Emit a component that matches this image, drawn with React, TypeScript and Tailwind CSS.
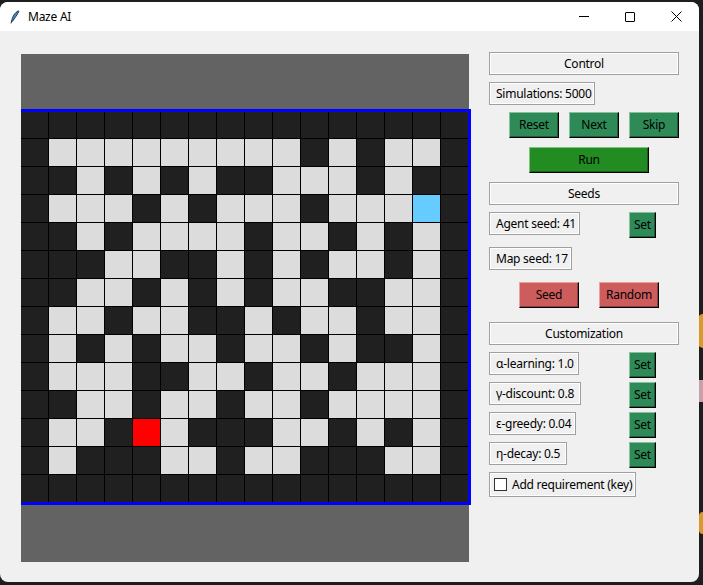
import React from "react";

const MAZE = [
  "DDDDDDDDDDDDDDDD",
  "DLLLLLLLLLDLDLLD",
  "DDLDLDLDDLLLDLDD",
  "DLLLDLDLLLDLLLBD",
  "DDLDLLLLDLLDLDLD",
  "DDDLLDDLDLDLLDLD",
  "DDLLDLDLDLLDDLLD",
  "DLLDLLDDLDLLDLLD",
  "DLDLDLLDLLDLDDLD",
  "DLLLDDLLDLLDLLLD",
  "DDLLDLLDLLDLLLLD",
  "DLLDRLDDDLLDLDLD",
  "DLDDDLLDLLDDDLLD",
  "DDDDDDDDDDDDDDDD",
];

const cellColor: Record<string, string> = {
  D: "bg-[#202020]",
  L: "bg-[#dcdcdc]",
  B: "bg-[#66ccff]",
  R: "bg-[#ff0000]",
};

function Frame({ children, w, center }: { children: React.ReactNode; w: string; center?: boolean }) {
  return (
    <div
      className={`flex h-[23px] items-center whitespace-nowrap border border-[#a0a0a0] shadow-[inset_1px_1px_0_#ffffff,inset_-1px_-1px_0_#ffffff] ${w} ${
        center ? "justify-center" : "pl-[6px]"
      }`}
    >
      {children}
    </div>
  );
}

function Btn({ children, tone, w }: { children: React.ReactNode; tone: "sea" | "forest" | "red"; w: string }) {
  const tones = {
    sea: "bg-[#2e8b57] border-t-[#86c09d] border-l-[#86c09d] shadow-[inset_-1px_-1px_0_#1d5c39]",
    forest: "bg-[#228b22] border-t-[#7fc07f] border-l-[#7fc07f] shadow-[inset_-1px_-1px_0_#166016]",
    red: "bg-[#cd5c5c] border-t-[#eba0a0] border-l-[#eba0a0] shadow-[inset_-1px_-1px_0_#8e3c3c]",
  };
  return (
    <div
      className={`flex h-[26px] items-center justify-center whitespace-nowrap border border-r-black border-b-black text-black ${tones[tone]} ${w}`}
    >
      {children}
    </div>
  );
}

function Feather() {
  return (
    <svg width="10" height="14" viewBox="0 0 10 14">
      <path d="M8.5 0.8 C5 2.5 2.5 6 1.6 11 L2.6 11.3 C4.5 8 7.5 5 8.8 1.2 Z" fill="#4f86d6" stroke="#1b2a4a" strokeWidth="0.9" />
      <path d="M1.6 11 L1 13.4" stroke="#1b2a4a" strokeWidth="1" />
    </svg>
  );
}

export default function App() {
  return (
    <div
      className="relative h-[585px] w-[703px] overflow-hidden bg-[#1e1e1e] text-[12px] tracking-[-0.25px] text-black"
      style={{ fontFamily: '"Noto Sans", "Open Sans", sans-serif' }}
    >
      <div className="absolute right-0 top-[314px] h-[34px] w-[5px] rounded-l-full bg-[#d99a2b]" />
      <div className="absolute right-0 top-[380px] h-[22px] w-[4px] bg-[#c9a0a8]" />
      <div className="absolute right-0 top-[512px] h-[22px] w-[4px] rounded-l-full bg-[#d99a2b]" />

      <div className="relative mt-[2px] flex h-[580px] w-[699px] flex-col overflow-hidden rounded-lg bg-[#f0f0f0]">
        <div className="flex h-[29px] items-center bg-white">
          <div className="ml-[9px] mt-[1px] flex w-[12px] justify-center">
            <Feather />
          </div>
          <div className="ml-[7px] text-[12px] leading-none">Maze AI</div>
          <div className="ml-auto flex h-full items-center">
            <div className="flex w-[46px] justify-center">
              <div className="h-px w-[10px] bg-black" />
            </div>
            <div className="flex w-[46px] justify-center">
              <div className="h-[10px] w-[10px] rounded-[1px] border border-black" />
            </div>
            <div className="flex w-[46px] justify-center">
              <svg width="11" height="11" viewBox="0 0 11 11">
                <path d="M0.5 0.5 L10.5 10.5 M10.5 0.5 L0.5 10.5" stroke="black" strokeWidth="1" />
              </svg>
            </div>
          </div>
        </div>

        <div className="flex pl-[21px] pt-[23px]">
          <div className="flex w-[448px] flex-col bg-[#636363]">
            <div className="h-[55px]" />
            <div className="w-[450px] border-y-[3px] border-r-[3px] border-[#0000ff] bg-black">
              <div className="grid grid-cols-[27px_repeat(15,27px)] grid-rows-[26px_repeat(13,27px)] gap-px">
                {MAZE.flatMap((row, r) =>
                  row.split("").map((c, i) => <div key={`${r}-${i}`} className={cellColor[c]} />),
                )}
              </div>
            </div>
            <div className="h-[57px]" />
          </div>

          <div className="ml-[20px] mt-[-2px] flex w-[190px] flex-col">
            <Frame w="w-[190px]" center>
              Control
            </Frame>
            <div className="mt-[7px]">
              <Frame w="w-[106px]">Simulations: 5000</Frame>
            </div>
            <div className="mt-[7px] flex gap-[10px] pl-[20px]">
              <Btn tone="sea" w="w-[50px]">
                Reset
              </Btn>
              <Btn tone="sea" w="w-[50px]">
                Next
              </Btn>
              <Btn tone="sea" w="w-[50px]">
                Skip
              </Btn>
            </div>
            <div className="mt-[9px] pl-[40px]">
              <Btn tone="forest" w="w-[120px]">
                Run
              </Btn>
            </div>
            <div className="mt-[9px]">
              <Frame w="w-[190px]" center>
                Seeds
              </Frame>
            </div>
            <div className="mt-[7px] flex items-start">
              <Frame w="w-[91px]">Agent seed: 41</Frame>
              <div className="ml-[49px]">
                <Btn tone="sea" w="w-[27px]">
                  Set
                </Btn>
              </div>
            </div>
            <div className="mt-[9px]">
              <Frame w="w-[83px]">Map seed: 17</Frame>
            </div>
            <div className="mt-[12px] flex gap-[20px] pl-[30px]">
              <Btn tone="red" w="w-[60px]">
                Seed
              </Btn>
              <Btn tone="red" w="w-[60px]">
                Random
              </Btn>
            </div>
            <div className="mt-[14px]">
              <Frame w="w-[190px]" center>
                Customization
              </Frame>
            </div>
            {[
              ["α-learning: 1.0", "w-[90px]"],
              ["γ-discount: 0.8", "w-[92px]"],
              ["ε-greedy: 0.04", "w-[87px]"],
              ["η-decay: 0.5", "w-[78px]"],
            ].map(([label, w], i) => (
              <div key={label} className={`flex items-start ${i === 0 ? "mt-[7px]" : "mt-[4px]"}`}>
                <Frame w={w}>{label}</Frame>
                <div className="ml-auto mr-[23px]">
                  <Btn tone="sea" w="w-[27px]">
                    Set
                  </Btn>
                </div>
              </div>
            ))}
            <div className="mt-[4px] flex h-[25px] w-[147px] items-center whitespace-nowrap border border-[#a0a0a0] pl-[4px] shadow-[inset_1px_1px_0_#ffffff,inset_-1px_-1px_0_#ffffff]">
              <div className="h-[13px] w-[13px] shrink-0 border border-[#333333] bg-white" />
              <span className="ml-[5px]">Add requirement (key)</span>
            </div>
          </div>
        </div>
      </div>
    </div>
  );
}
